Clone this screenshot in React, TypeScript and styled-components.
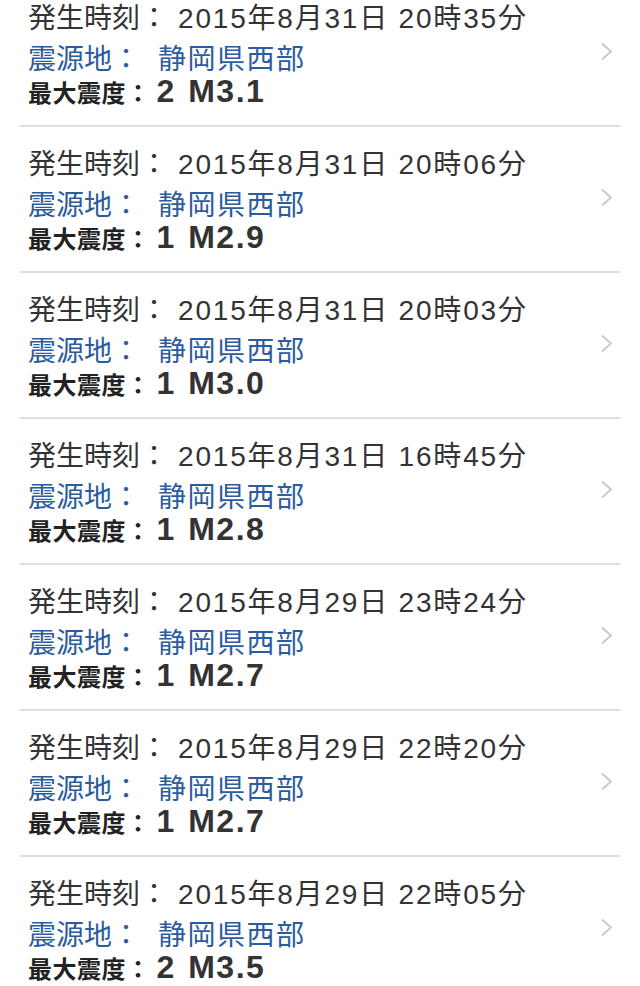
import React from 'react';
import styled, { createGlobalStyle } from 'styled-components';

const GlobalStyle = createGlobalStyle`
  body {
    margin: 0;
    background: #ffffff;
    font-family: "Liberation Sans", "Noto Sans CJK JP", sans-serif;
  }
`;

const List = styled.ul`
  list-style: none;
  margin: -19px 0 0 0;
  padding: 0;
  overflow: hidden;
`;

const Row = styled.li`
  display: flex;
  align-items: center;
  margin: 0 20px;
  padding: 18px 7px 22px 8px;
  border-bottom: 2px solid #dedede;
`;

const Body = styled.div`
  flex: 1;
  min-width: 0;
`;

const Line = styled.div<{ $height: number; $color: string }>`
  font-size: 28px;
  line-height: ${(p) => p.$height}px;
  color: ${(p) => p.$color};
  white-space: nowrap;
`;

const Detail = styled.span<{ $gap: number; $spacing: number }>`
  margin-left: ${(p) => p.$gap}px;
  letter-spacing: ${(p) => p.$spacing}px;
`;

const IntensityLine = styled.div`
  display: flex;
  align-items: baseline;
  height: 23px;
  line-height: 23px;
  color: #222222;
  white-space: nowrap;
`;

const Label = styled.span`
  font-size: 24px;
  font-weight: 700;
  letter-spacing: 0.5px;
`;

const Value = styled.span`
  margin-left: 6px;
  font-size: 32px;
  font-weight: 700;
  letter-spacing: 1.5px;
  word-spacing: 2px;
  color: #333333;
`;

const Chevron = () => (
  <svg width="13" height="19" viewBox="0 0 13 19" fill="none">
    <path d="M2 1.5 L11 9.5 L2 17.5" stroke="#c7c7cc" strokeWidth="1.8" />
  </svg>
);

type Quake = { time: string; intensity: string; mag: string };

const quakes: Quake[] = [
  { time: '2015年8月31日 20時35分', intensity: '2', mag: 'M3.1' },
  { time: '2015年8月31日 20時06分', intensity: '1', mag: 'M2.9' },
  { time: '2015年8月31日 20時03分', intensity: '1', mag: 'M3.0' },
  { time: '2015年8月31日 16時45分', intensity: '1', mag: 'M2.8' },
  { time: '2015年8月29日 23時24分', intensity: '1', mag: 'M2.7' },
  { time: '2015年8月29日 22時20分', intensity: '1', mag: 'M2.7' },
  { time: '2015年8月29日 22時05分', intensity: '2', mag: 'M3.5' },
];

export default function App() {
  return (
    <>
      <GlobalStyle />
      <List>
        {quakes.map((q, i) => (
          <Row key={i}>
            <Body>
              <Line $height={40} $color="#333333">
                発生時刻：<Detail $gap={10} $spacing={1.8}>{q.time}</Detail>
              </Line>
              <Line $height={41} $color="#2b5c9e">
                震源地：<Detail $gap={18} $spacing={1.5}>静岡県西部</Detail>
              </Line>
              <IntensityLine>
                <Label>最大震度：</Label>
                <Value>
                  {q.intensity} {q.mag}
                </Value>
              </IntensityLine>
            </Body>
            <Chevron />
          </Row>
        ))}
      </List>
    </>
  );
}
